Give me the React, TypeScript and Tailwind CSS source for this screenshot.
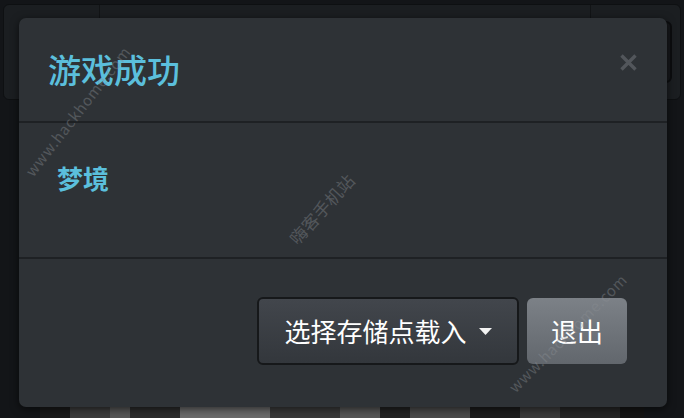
const font = '"Noto Sans CJK SC", "Noto Sans", sans-serif'

function Backdrop() {
  return (
    <div className="absolute inset-0 flex flex-col">
      {/* underlying page, dimmed */}
      <div className="flex h-[96px] mx-[3px] mt-[4px] rounded-md bg-[#1b1e21] border border-[#0e1012]">
        <div className="w-[96px] border-r border-[#121416]" />
        <div className="flex-1" />
        <div className="w-[90px] border-l border-[#121416] flex items-center justify-center">
          <div className="w-[72px] h-[62px] rounded-md border-2 border-[#0c0d0f] bg-[#16181b]" />
        </div>
      </div>
      <div className="flex-1" />
      <div className="flex h-[12px] mx-[40px]">
        <div className="w-[30px] bg-[#1a1a1a]" />
        <div className="w-[40px] bg-[#3b3b3b]" />
        <div className="w-[20px] bg-[#555]" />
        <div className="w-[50px] bg-[#2b2b2b]" />
        <div className="w-[90px] bg-[#6a6a6a]" />
        <div className="w-[70px] bg-[#3a3a3a]" />
        <div className="w-[40px] bg-[#555]" />
        <div className="w-[30px] bg-[#222]" />
        <div className="w-[60px] bg-[#4a4a4a]" />
        <div className="w-[50px] bg-[#1c1c1c]" />
        <div className="w-[40px] bg-[#3c3c3c]" />
        <div className="w-[60px] bg-[#262626]" />
        <div className="flex-1 bg-[#151515]" />
      </div>
    </div>
  )
}

function Watermarks() {
  return (
    <div className="absolute inset-0 pointer-events-none text-[#8a8e93] opacity-40">
      <span className="absolute left-[-2px] top-[100px] text-[15px] tracking-wider -rotate-[52deg]">
        www.hackhome.com
      </span>
      <span className="absolute left-[278px] top-[196px] text-[17px] tracking-wide -rotate-[48deg]">
        嗨客手机站
      </span>
      <span className="absolute left-[488px] top-[322px] text-[15px] tracking-wider -rotate-[45deg]">
        www.hackhome.com
      </span>
    </div>
  )
}

export default function App() {
  return (
    <div className="relative w-[684px] h-[418px] overflow-hidden bg-[#131518]" style={{ fontFamily: font }}>
      <Backdrop />

      <div className="absolute left-[19px] top-[18px] w-[648px] h-[389px] rounded-[7px] bg-[#2e3236] flex flex-col shadow-[0_2px_8px_rgba(0,0,0,0.6)]">
        {/* Header */}
        <div className="h-[105px] flex items-start justify-between pl-[29px] pr-[29px] pt-[35px] border-b-2 border-[#1e2124]">
          <h1 className="text-[33px] font-medium text-[#5bbfdc] leading-none">游戏成功</h1>
          <svg width="19" height="19" viewBox="0 0 19 19" className="mt-[0px]">
            <path d="M2.5 2.5 L16.5 16.5 M16.5 2.5 L2.5 16.5" stroke="#52565b" strokeWidth="3.4" />
          </svg>
        </div>

        {/* Body */}
        <div className="h-[136px] pl-[38px] pt-[42px] border-b-2 border-[#1e2124]">
          <p className="text-[26px] font-bold text-[#5bbfdc] leading-none">梦境</p>
        </div>

        {/* Footer */}
        <div className="flex-1 flex justify-end items-start pt-[38px] pr-[40px] gap-[8px]">
          <button className="w-[262px] h-[68px] rounded-[6px] border-2 border-[#16181a] bg-gradient-to-b from-[#42464c] to-[#33373c] text-white text-[26px] flex items-center justify-center gap-[12px] pb-[2px]">
            <span>选择存储点载入</span>
            <svg width="13" height="8" viewBox="0 0 13 8" className="mt-[3px]">
              <path d="M0 0 H13 L6.5 7 Z" fill="#f2f2f2" />
            </svg>
          </button>
          <button className="w-[100px] h-[66px] mt-[1px] rounded-[6px] bg-gradient-to-b from-[#7c8187] to-[#62676d] text-white text-[26px] flex items-center justify-center pb-[2px]">
            退出
          </button>
        </div>
      </div>

      <Watermarks />
    </div>
  )
}
